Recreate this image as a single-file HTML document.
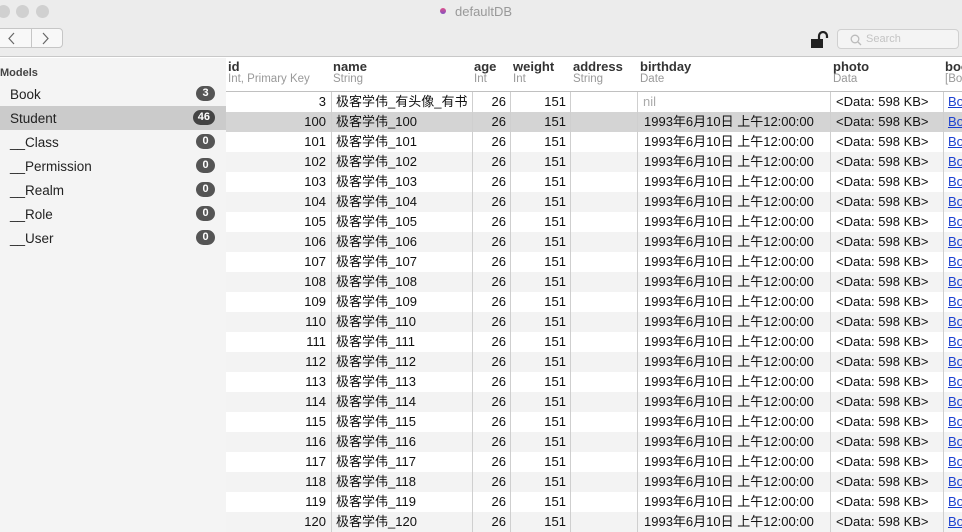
<!DOCTYPE html>
<html><head><meta charset="utf-8"><style>
*{margin:0;padding:0;box-sizing:border-box}
body{width:962px;height:532px;overflow:hidden;background:#fff;font-family:"Liberation Sans","Noto Sans CJK SC",sans-serif;font-size:13px;color:#111;position:relative}
.tb{position:absolute;left:0;top:0;width:962px;height:57px;background:#ececec;border-bottom:1px solid #c8c8c8}
.dot{position:absolute;top:5px;width:13px;height:13px;border-radius:50%;background:#d0d0d0}
.title{position:absolute;left:440px;top:4px;font-size:13px;color:#999}
.title i{display:inline-block;width:6px;height:6px;border-radius:50%;background:linear-gradient(#e0508a,#8050c0);margin-right:9px;vertical-align:2px}
.nav{position:absolute;left:-4px;top:28px;width:67px;height:20px;border:1px solid #c6c6c6;border-radius:4px;background:#f8f8f8}
.nav b{position:absolute;left:34px;top:0;width:1px;height:18px;background:#c6c6c6}
.search{position:absolute;left:837px;top:29px;width:122px;height:20px;border:1px solid #d0d0d0;border-radius:4px;background:#f4f4f4;color:#c4c4c4;font-size:11px;padding:3px 0 0 28px}
.side{position:absolute;left:0;top:58px;width:226px;height:474px;background:#f4f4f4}
.side .h{position:absolute;left:0;top:9px;font-size:11px;font-weight:bold;color:#444}
.it{position:absolute;left:0;width:226px;height:24px;font-size:13.5px;padding:5px 0 0 10px;color:#222}
.it.sel{background:#cbcbcb}
.bd{position:absolute;right:11px;top:4px;height:15px;min-width:19px;border-radius:8px;background:#555;color:#fff;font-size:11px;font-weight:bold;text-align:center;padding:1px 5px 0}
.hd{position:absolute;top:58px;height:34px;font-size:13px}
.hd b{display:block;font-weight:bold;color:#333;margin-top:1px;font-size:13px}
.hd span{display:block;font-size:11.5px;color:#999;margin-top:-1px}
.hline{position:absolute;left:226px;top:91px;width:736px;height:1px;background:#c0c0c0}
.row{position:absolute;left:226px;width:736px;height:20px;line-height:20px}
.row.g{background:#f3f3f3}.row.s{background:#d4d4d4}
.c{position:absolute;top:0;height:20px;white-space:nowrap;overflow:hidden}
.r{text-align:right}
.vl{position:absolute;top:92px;width:1px;height:440px;background:#cfcfcf}
a{color:#1a3fd0;text-decoration:underline}
</style></head><body>
<div class="tb">
<div class="dot" style="left:-3px"></div><div class="dot" style="left:16px"></div><div class="dot" style="left:36px"></div>
<div class="title"><i></i>defaultDB</div>
<div class="nav"><b></b><svg style="position:absolute;left:10px;top:3px" width="10" height="13"><path d="M7 1L2 6.5L7 12" stroke="#666" stroke-width="1.2" fill="none"/></svg><svg style="position:absolute;left:44px;top:3px" width="10" height="13"><path d="M2 1L7 6.5L2 12" stroke="#666" stroke-width="1.2" fill="none"/></svg></div>
<svg style="position:absolute;left:810px;top:31px" width="22" height="18" viewBox="0 0 22 18"><rect x="1" y="8" width="12" height="9" fill="#222"/><path d="M9 8V5a4 4 0 0 1 8 0v2" stroke="#222" stroke-width="2.2" fill="none"/></svg>
<div class="search"><svg style="position:absolute;left:12px;top:4px" width="12" height="12"><circle cx="5" cy="5" r="3.8" stroke="#bbb" stroke-width="1.3" fill="none"/><path d="M8 8l3 3" stroke="#bbb" stroke-width="1.3"/></svg>Search</div>
</div>
<div class="side">
<div class="h">Models</div>
<div class="it" style="top:24px">Book<span class="bd">3</span></div>
<div class="it sel" style="top:48px">Student<span class="bd" style="background:#444">46</span></div>
<div class="it" style="top:72px">__Class<span class="bd">0</span></div>
<div class="it" style="top:96px">__Permission<span class="bd">0</span></div>
<div class="it" style="top:120px">__Realm<span class="bd">0</span></div>
<div class="it" style="top:144px">__Role<span class="bd">0</span></div>
<div class="it" style="top:168px">__User<span class="bd">0</span></div>
</div>
<div class="hd" style="left:228px"><b>id</b><span>Int, Primary Key</span></div>
<div class="hd" style="left:333px"><b>name</b><span>String</span></div>
<div class="hd" style="left:474px"><b>age</b><span>Int</span></div>
<div class="hd" style="left:513px"><b>weight</b><span>Int</span></div>
<div class="hd" style="left:573px"><b>address</b><span>String</span></div>
<div class="hd" style="left:640px"><b>birthday</b><span>Date</span></div>
<div class="hd" style="left:833px"><b>photo</b><span>Data</span></div>
<div class="hd" style="left:945px"><b>boo</b><span>[Bo</span></div>
<div class="hline"></div>

<div class="row" style="top:92px"><div class="c r" style="left:0;width:100px">3</div><div class="c" style="left:110px">极客学伟_有头像_有书</div><div class="c r" style="left:246px;width:34px">26</div><div class="c r" style="left:284px;width:56px">151</div><div class="c" style="left:417px;color:#aaa">nil</div><div class="c" style="left:610px">&lt;Data: 598 KB&gt;</div><div class="c" style="left:722px"><a>Bo</a></div></div>
<div class="row s" style="top:112px"><div class="c r" style="left:0;width:100px">100</div><div class="c" style="left:110px">极客学伟_100</div><div class="c r" style="left:246px;width:34px">26</div><div class="c r" style="left:284px;width:56px">151</div><div class="c" style="left:418px">1993年6月10日 上午12:00:00</div><div class="c" style="left:610px">&lt;Data: 598 KB&gt;</div><div class="c" style="left:722px"><a>Bo</a></div></div>
<div class="row" style="top:132px"><div class="c r" style="left:0;width:100px">101</div><div class="c" style="left:110px">极客学伟_101</div><div class="c r" style="left:246px;width:34px">26</div><div class="c r" style="left:284px;width:56px">151</div><div class="c" style="left:418px">1993年6月10日 上午12:00:00</div><div class="c" style="left:610px">&lt;Data: 598 KB&gt;</div><div class="c" style="left:722px"><a>Bo</a></div></div>
<div class="row g" style="top:152px"><div class="c r" style="left:0;width:100px">102</div><div class="c" style="left:110px">极客学伟_102</div><div class="c r" style="left:246px;width:34px">26</div><div class="c r" style="left:284px;width:56px">151</div><div class="c" style="left:418px">1993年6月10日 上午12:00:00</div><div class="c" style="left:610px">&lt;Data: 598 KB&gt;</div><div class="c" style="left:722px"><a>Bo</a></div></div>
<div class="row" style="top:172px"><div class="c r" style="left:0;width:100px">103</div><div class="c" style="left:110px">极客学伟_103</div><div class="c r" style="left:246px;width:34px">26</div><div class="c r" style="left:284px;width:56px">151</div><div class="c" style="left:418px">1993年6月10日 上午12:00:00</div><div class="c" style="left:610px">&lt;Data: 598 KB&gt;</div><div class="c" style="left:722px"><a>Bo</a></div></div>
<div class="row g" style="top:192px"><div class="c r" style="left:0;width:100px">104</div><div class="c" style="left:110px">极客学伟_104</div><div class="c r" style="left:246px;width:34px">26</div><div class="c r" style="left:284px;width:56px">151</div><div class="c" style="left:418px">1993年6月10日 上午12:00:00</div><div class="c" style="left:610px">&lt;Data: 598 KB&gt;</div><div class="c" style="left:722px"><a>Bo</a></div></div>
<div class="row" style="top:212px"><div class="c r" style="left:0;width:100px">105</div><div class="c" style="left:110px">极客学伟_105</div><div class="c r" style="left:246px;width:34px">26</div><div class="c r" style="left:284px;width:56px">151</div><div class="c" style="left:418px">1993年6月10日 上午12:00:00</div><div class="c" style="left:610px">&lt;Data: 598 KB&gt;</div><div class="c" style="left:722px"><a>Bo</a></div></div>
<div class="row g" style="top:232px"><div class="c r" style="left:0;width:100px">106</div><div class="c" style="left:110px">极客学伟_106</div><div class="c r" style="left:246px;width:34px">26</div><div class="c r" style="left:284px;width:56px">151</div><div class="c" style="left:418px">1993年6月10日 上午12:00:00</div><div class="c" style="left:610px">&lt;Data: 598 KB&gt;</div><div class="c" style="left:722px"><a>Bo</a></div></div>
<div class="row" style="top:252px"><div class="c r" style="left:0;width:100px">107</div><div class="c" style="left:110px">极客学伟_107</div><div class="c r" style="left:246px;width:34px">26</div><div class="c r" style="left:284px;width:56px">151</div><div class="c" style="left:418px">1993年6月10日 上午12:00:00</div><div class="c" style="left:610px">&lt;Data: 598 KB&gt;</div><div class="c" style="left:722px"><a>Bo</a></div></div>
<div class="row g" style="top:272px"><div class="c r" style="left:0;width:100px">108</div><div class="c" style="left:110px">极客学伟_108</div><div class="c r" style="left:246px;width:34px">26</div><div class="c r" style="left:284px;width:56px">151</div><div class="c" style="left:418px">1993年6月10日 上午12:00:00</div><div class="c" style="left:610px">&lt;Data: 598 KB&gt;</div><div class="c" style="left:722px"><a>Bo</a></div></div>
<div class="row" style="top:292px"><div class="c r" style="left:0;width:100px">109</div><div class="c" style="left:110px">极客学伟_109</div><div class="c r" style="left:246px;width:34px">26</div><div class="c r" style="left:284px;width:56px">151</div><div class="c" style="left:418px">1993年6月10日 上午12:00:00</div><div class="c" style="left:610px">&lt;Data: 598 KB&gt;</div><div class="c" style="left:722px"><a>Bo</a></div></div>
<div class="row g" style="top:312px"><div class="c r" style="left:0;width:100px">110</div><div class="c" style="left:110px">极客学伟_110</div><div class="c r" style="left:246px;width:34px">26</div><div class="c r" style="left:284px;width:56px">151</div><div class="c" style="left:418px">1993年6月10日 上午12:00:00</div><div class="c" style="left:610px">&lt;Data: 598 KB&gt;</div><div class="c" style="left:722px"><a>Bo</a></div></div>
<div class="row" style="top:332px"><div class="c r" style="left:0;width:100px">111</div><div class="c" style="left:110px">极客学伟_111</div><div class="c r" style="left:246px;width:34px">26</div><div class="c r" style="left:284px;width:56px">151</div><div class="c" style="left:418px">1993年6月10日 上午12:00:00</div><div class="c" style="left:610px">&lt;Data: 598 KB&gt;</div><div class="c" style="left:722px"><a>Bo</a></div></div>
<div class="row g" style="top:352px"><div class="c r" style="left:0;width:100px">112</div><div class="c" style="left:110px">极客学伟_112</div><div class="c r" style="left:246px;width:34px">26</div><div class="c r" style="left:284px;width:56px">151</div><div class="c" style="left:418px">1993年6月10日 上午12:00:00</div><div class="c" style="left:610px">&lt;Data: 598 KB&gt;</div><div class="c" style="left:722px"><a>Bo</a></div></div>
<div class="row" style="top:372px"><div class="c r" style="left:0;width:100px">113</div><div class="c" style="left:110px">极客学伟_113</div><div class="c r" style="left:246px;width:34px">26</div><div class="c r" style="left:284px;width:56px">151</div><div class="c" style="left:418px">1993年6月10日 上午12:00:00</div><div class="c" style="left:610px">&lt;Data: 598 KB&gt;</div><div class="c" style="left:722px"><a>Bo</a></div></div>
<div class="row g" style="top:392px"><div class="c r" style="left:0;width:100px">114</div><div class="c" style="left:110px">极客学伟_114</div><div class="c r" style="left:246px;width:34px">26</div><div class="c r" style="left:284px;width:56px">151</div><div class="c" style="left:418px">1993年6月10日 上午12:00:00</div><div class="c" style="left:610px">&lt;Data: 598 KB&gt;</div><div class="c" style="left:722px"><a>Bo</a></div></div>
<div class="row" style="top:412px"><div class="c r" style="left:0;width:100px">115</div><div class="c" style="left:110px">极客学伟_115</div><div class="c r" style="left:246px;width:34px">26</div><div class="c r" style="left:284px;width:56px">151</div><div class="c" style="left:418px">1993年6月10日 上午12:00:00</div><div class="c" style="left:610px">&lt;Data: 598 KB&gt;</div><div class="c" style="left:722px"><a>Bo</a></div></div>
<div class="row g" style="top:432px"><div class="c r" style="left:0;width:100px">116</div><div class="c" style="left:110px">极客学伟_116</div><div class="c r" style="left:246px;width:34px">26</div><div class="c r" style="left:284px;width:56px">151</div><div class="c" style="left:418px">1993年6月10日 上午12:00:00</div><div class="c" style="left:610px">&lt;Data: 598 KB&gt;</div><div class="c" style="left:722px"><a>Bo</a></div></div>
<div class="row" style="top:452px"><div class="c r" style="left:0;width:100px">117</div><div class="c" style="left:110px">极客学伟_117</div><div class="c r" style="left:246px;width:34px">26</div><div class="c r" style="left:284px;width:56px">151</div><div class="c" style="left:418px">1993年6月10日 上午12:00:00</div><div class="c" style="left:610px">&lt;Data: 598 KB&gt;</div><div class="c" style="left:722px"><a>Bo</a></div></div>
<div class="row g" style="top:472px"><div class="c r" style="left:0;width:100px">118</div><div class="c" style="left:110px">极客学伟_118</div><div class="c r" style="left:246px;width:34px">26</div><div class="c r" style="left:284px;width:56px">151</div><div class="c" style="left:418px">1993年6月10日 上午12:00:00</div><div class="c" style="left:610px">&lt;Data: 598 KB&gt;</div><div class="c" style="left:722px"><a>Bo</a></div></div>
<div class="row" style="top:492px"><div class="c r" style="left:0;width:100px">119</div><div class="c" style="left:110px">极客学伟_119</div><div class="c r" style="left:246px;width:34px">26</div><div class="c r" style="left:284px;width:56px">151</div><div class="c" style="left:418px">1993年6月10日 上午12:00:00</div><div class="c" style="left:610px">&lt;Data: 598 KB&gt;</div><div class="c" style="left:722px"><a>Bo</a></div></div>
<div class="row g" style="top:512px"><div class="c r" style="left:0;width:100px">120</div><div class="c" style="left:110px">极客学伟_120</div><div class="c r" style="left:246px;width:34px">26</div><div class="c r" style="left:284px;width:56px">151</div><div class="c" style="left:418px">1993年6月10日 上午12:00:00</div><div class="c" style="left:610px">&lt;Data: 598 KB&gt;</div><div class="c" style="left:722px"><a>Bo</a></div></div>

<div class="vl" style="left:331px"></div><div class="vl" style="left:472px"></div><div class="vl" style="left:510px"></div><div class="vl" style="left:570px"></div><div class="vl" style="left:637px"></div><div class="vl" style="left:830px"></div><div class="vl" style="left:943px"></div>
</body></html>
